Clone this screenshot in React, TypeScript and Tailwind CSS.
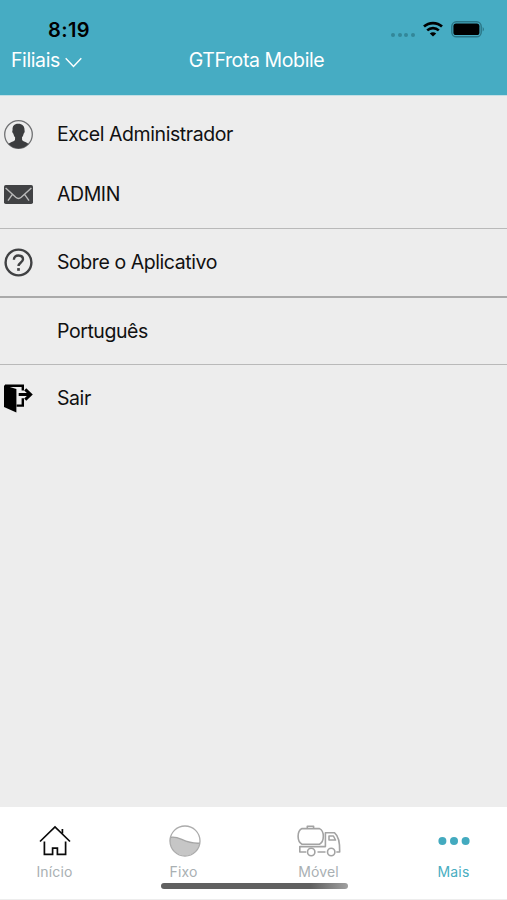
import React from 'react';

type TabItem = {
  label: string;
  icon: React.ReactNode;
  active?: boolean;
  className: string;
  labelClass: string;
};

const WifiIcon = () => (
  <svg width="20" height="16" viewBox="0 0 20 16" fill="none" stroke="#000">
    <path d="M1 5.6C6 1 14 1 19 5.6" strokeWidth="2.7" />
    <path d="M4.2 9.4C7.4 6.4 12.6 6.4 15.8 9.4" strokeWidth="2.6" />
    <path d="M10 15.6 6.8 12.5C8.6 10.9 11.4 10.9 13.2 12.5Z" fill="#000" stroke="none" />
  </svg>
);

const BatteryIcon = () => (
  <svg width="34" height="17" viewBox="0 0 34 17">
    <rect x="0.8" y="0.8" width="29.4" height="15" rx="4.6" fill="none" stroke="#2a7585" strokeWidth="1.4" />
    <rect x="2.4" y="2.6" width="26" height="11.4" rx="2.6" fill="#000" />
    <path d="M31.7 6.1C33.4 6.8 33.4 9.8 31.7 10.5Z" fill="#2a7585" />
  </svg>
);

const UserIcon = () => (
  <svg className="mt-px" width="29" height="29" viewBox="0 0 29 29">
    <circle cx="14.5" cy="14.5" r="13.8" fill="none" stroke="#707173" strokeWidth="1.3" />
    <path
      d="M14.2 3.8C18.4 3.8 20.6 6.2 20.5 10C20.5 10.5 20.8 10.7 20.7 11.5C20.6 12.6 20.2 13.3 19.6 13.7C19.3 15.4 18.6 16.5 18 17.3L18.1 20C18.9 21.5 22.8 22.1 24.4 24C22 26.8 18.5 28.4 14.5 28.4C10.5 28.4 7 26.8 4.6 24C6.2 22.1 10.2 21.5 11 20L11.1 17.3C10.3 16.5 9.6 15.2 9.4 13.7C8.7 13.1 8.3 12.5 8.2 11.5C8.2 10.8 8.5 10.5 8.6 10C8.3 6.3 10 3.8 14.2 3.8Z"
      fill="#3b3c3e"
    />
  </svg>
);

const MailIcon = () => (
  <svg width="29" height="19" viewBox="0 0 29 19" fill="none">
    <rect width="29" height="19" rx="1.8" fill="#414244" />
    <path d="M1.6 3 11.8 12.3Q14.5 14.6 17.2 12.3L27.4 3M4 15.6 8.4 9.4M25 15.6 20.6 9.4" stroke="#bababa" strokeWidth="1.4" />
  </svg>
);

const HelpIcon = () => (
  <svg width="29" height="29" viewBox="0 0 29 29" fill="none" stroke="#404143">
    <circle cx="14.5" cy="14.5" r="12.9" strokeWidth="2.4" />
    <path d="M9.9 11.7C9.9 9 11.7 7.5 14.4 7.5C17.2 7.5 19 9 19 11.3C19 14.5 14.5 14.4 14.5 18.1" strokeWidth="2.4" />
    <path d="M14.5 20.1V22.8" strokeWidth="2.7" />
  </svg>
);

const ExitIcon = () => (
  <svg width="29" height="29" viewBox="0 0 29 29">
    <path d="M0 1.3 12.4 5V28.5L0 23Z" fill="#000" />
    <path d="M1 1.7H18.8V6.4M18.8 14.2V21.6H12.6" fill="none" stroke="#000" strokeWidth="2.4" />
    <path d="M14.7 10.5H26M21.2 5.4 26.6 10.5 21.2 15.6" fill="none" stroke="#000" strokeWidth="3" />
  </svg>
);

const HomeIcon = () => (
  <svg width="32" height="32" viewBox="0 0 32 32" fill="none" stroke="#0a0a0a" strokeWidth="1.7">
    <path d="M1 16.5 16 2 31 16.5" />
    <path d="M23.4 8.4V4M5.4 16.5V29.3H13.6V23.2H18.4V29.3H26.6V16.5" />
  </svg>
);

const TankIcon = () => (
  <svg width="32" height="32" viewBox="0 0 32 32">
    <path d="M1 12.5C10 9.5 15 19.5 31 18.1A15 15 0 1 1 1 12.5Z" fill="#c6c6c6" />
    <path d="M1 12.5C10 9.5 15 19.5 31 18.1" fill="none" stroke="#a5a5a5" strokeWidth="1.4" />
    <circle cx="16" cy="16" r="15" fill="none" stroke="#ababab" strokeWidth="1.3" />
  </svg>
);

const TruckIcon = () => (
  <svg width="44" height="32" viewBox="0 0 44 32" fill="none" stroke="#a3a3a3" strokeWidth="1.6" strokeLinejoin="round">
    <path d="M5 3.6H22.5C27.6 6 27.6 16.7 22.5 19.2H5C-.2 16.7-.2 6 5 3.6Z" />
    <path d="M10.3 3.4V1.3H16.6V3.4" />
    <path d="M9.2 27H2.8V21.6H28.4V7.8H37.6C41 10.5 43 16 42.7 27H39.3M20.5 27H28.5" />
    <path d="M32 15V11H36.4L38.5 15Z" />
    <circle cx="14.2" cy="27" r="3.7" />
    <circle cx="34.2" cy="27" r="3.7" />
  </svg>
);

const DotsIcon = () => (
  <svg width="32" height="32" viewBox="0 0 32 32" fill="#43aabf">
    <circle cx="4.4" cy="16" r="4" />
    <circle cx="16" cy="16" r="4" />
    <circle cx="27.6" cy="16" r="4" />
  </svg>
);

const MenuRow = ({ icon, label, className }: { icon?: React.ReactNode; label: string; className: string }) => (
  <button className={`flex w-full items-center pl-1 text-left ${className}`}>
    <span className="flex w-[53px] shrink-0 items-center">{icon}</span>
    <span className="text-[19.5px] leading-6 tracking-[-0.43px] whitespace-nowrap text-[#111]">{label}</span>
  </button>
);

const tabs: TabItem[] = [
  { label: 'Início', icon: <HomeIcon />, className: 'w-[109px]', labelClass: 'tracking-[0.15px]' },
  { label: 'Fixo', icon: <TankIcon />, className: 'w-[151px]', labelClass: 'tracking-[0.1px] -ml-[2px]' },
  { label: 'Móvel', icon: <TruckIcon />, className: 'w-[118px]', labelClass: 'tracking-[0.1px] -ml-[1px]' },
  { label: 'Mais', icon: <DotsIcon />, active: true, className: 'w-[129px] pl-[22px]', labelClass: 'tracking-[0.2px]' },
];

export default function App() {
  return (
    <div className="relative flex h-[900px] w-[507px] flex-col overflow-hidden bg-[#ededed] font-['Inter','Liberation_Sans',sans-serif]">
      <header className="h-24 shrink-0 border-b border-[#c3dfe5] bg-[#46acc3]">
        <div className="flex h-[46px] items-start justify-between pt-[18px] pr-[22px] pl-[48px]">
          <span className="text-[20px] leading-6 font-semibold tracking-[0.4px] text-black">8:19</span>
          <div className="flex items-start pt-[3px]">
            <span className="mt-[12px] mr-[8px] flex gap-[2.6px]">
              {[0, 1, 2, 3].map(i => (
                <i key={i} className="size-[4px] rounded-full bg-[#338799]" />
              ))}
            </span>
            <WifiIcon />
            <span className="ml-2">
              <BatteryIcon />
            </span>
          </div>
        </div>
        <div className="grid h-7 grid-cols-[1fr_auto_1fr] items-center pr-[5px] pl-[11px] text-[19.5px] leading-7 tracking-[-0.4px] text-white">
          <button className="flex items-center text-left">
            <span>Filiais</span>
            <svg className="mt-[5px] ml-[5px]" width="17" height="11" viewBox="0 0 17 11" fill="none" stroke="#fff" strokeWidth="1.4">
              <path d="M.7 1.2 8.5 9.5 16.3 1.2" />
            </svg>
          </button>
          <h1>GTFrota Mobile</h1>
        </div>
      </header>

      <main className="flex-1">
        <div className="border-b border-[#b9b9b9] pt-2 pb-1">
          <MenuRow icon={<UserIcon />} label="Excel Administrador" className="h-[60px]" />
          <MenuRow icon={<MailIcon />} label="ADMIN" className="h-[60px]" />
        </div>
        <div className="border-b-2 border-[#aaaaaa] pb-px">
          <MenuRow icon={<HelpIcon />} label="Sobre o Aplicativo" className="h-[66px]" />
        </div>
        <div className="border-b border-[#b9b9b9]">
          <MenuRow label="Português" className="h-[66px]" />
        </div>
        <MenuRow icon={<ExitIcon />} label="Sair" className="h-[66px]" />
      </main>

      <nav className="flex h-[93px] shrink-0 border-b border-[#ededed] bg-white pt-[18px]">
        {tabs.map(tab => (
          <button key={tab.label} className={`flex flex-col items-center justify-start ${tab.className}`}>
            {tab.icon}
            <span className={`mt-[6px] text-[14px] leading-[18px] ${tab.active ? 'text-[#48aec1]' : 'text-[#a9b0b3]'} ${tab.labelClass}`}>
              {tab.label}
            </span>
          </button>
        ))}
      </nav>

      {/* home indicator */}
      <div className="absolute bottom-[11px] left-[161px] h-[6px] w-[187px] rounded-full bg-linear-to-r from-[#606060] from-80% to-[#a0a0a0]" />
    </div>
  );
}
